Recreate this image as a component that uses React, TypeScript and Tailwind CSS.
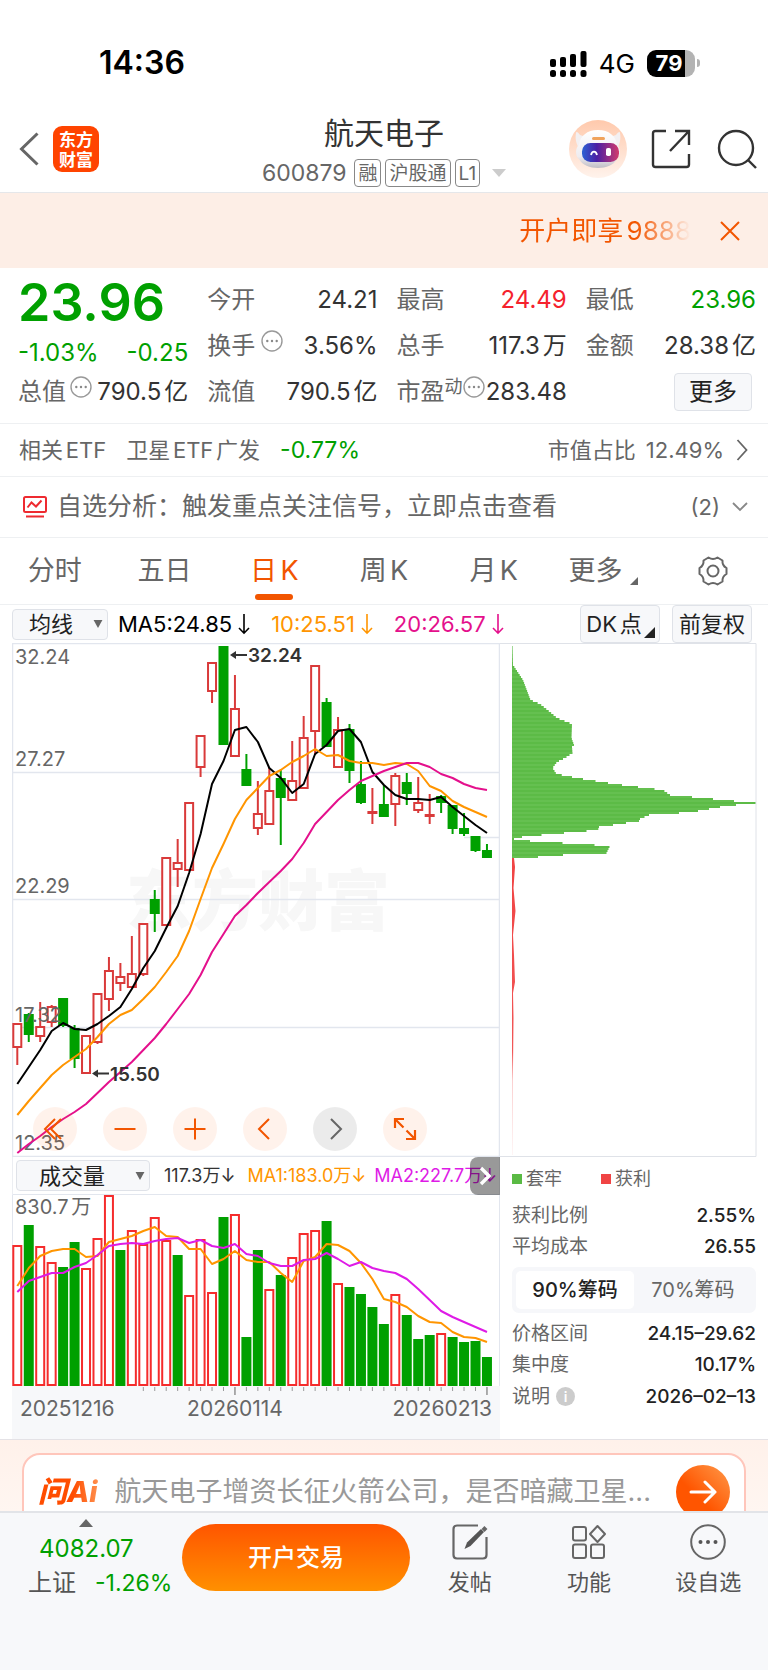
import React from "react";

type Candle = [kind: "r" | "g", high: number, top: number, bottom: number, low: number];

const FIRST_X = 17.3;
const STEP = 11.455;
const xAt = (i: number) => FIRST_X + i * STEP;

const candles: Candle[] = [
  ["r", 1024, 1024, 1047, 1065], ["g", 1013, 1015, 1034, 1042], ["r", 1002, 1027, 1036, 1042],
  ["r", 1005, 1007, 1022, 1027], ["g", 998, 999, 1025, 1027], ["g", 1025, 1029, 1058, 1068],
  ["r", 1036, 1036, 1073, 1073], ["r", 994, 994, 1042, 1044], ["r", 957, 971, 999, 1011],
  ["r", 963, 977, 983, 991], ["r", 936, 974, 987, 987], ["r", 924, 924, 974, 976],
  ["g", 890, 900, 913, 932], ["r", 858, 858, 925, 925], ["r", 839, 863, 869, 887],
  ["r", 803, 803, 870, 870], ["r", 736, 736, 767, 777], ["r", 663, 663, 691, 703],
  ["g", 646, 647, 744, 744], ["r", 675, 709, 756, 756], ["g", 754, 770, 785, 785],
  ["r", 781, 814, 828, 835], ["r", 768, 791, 824, 824], ["g", 770, 779, 797, 845],
  ["r", 741, 781, 800, 800], ["r", 716, 738, 788, 788], ["r", 666, 666, 731, 755],
  ["g", 698, 703, 746, 746], ["r", 717, 730, 767, 767], ["g", 724, 730, 770, 783],
  ["g", 761, 785, 802, 804], ["r", 788, 812, 813, 824], ["g", 785, 805, 816, 817],
  ["r", 773, 776, 804, 826], ["g", 773, 783, 793, 805], ["r", 777, 803, 810, 813],
  ["r", 794, 815, 816, 824], ["g", 795, 797, 802, 813], ["g", 806, 806, 828, 834],
  ["g", 813, 829, 833, 836], ["g", 837, 837, 850, 852], ["g", 844, 851, 857, 857],
];

const ma5 = [1084, 1067, 1050, 1031, 1023, 1029, 1030, 1024, 1016, 1007, 989, 968, 951, 928, 906, 873, 834, 784, 761, 730, 727, 742, 768, 778, 793, 784, 754, 745, 731, 729, 742, 772, 785, 795, 799, 799, 800, 797, 807, 816, 825, 833];
const ma10 = [1115, 1101, 1088, 1075, 1065, 1057, 1049, 1037, 1024, 1015, 1010, 999, 987, 972, 956, 931, 899, 868, 844, 819, 800, 788, 776, 770, 762, 756, 749, 756, 755, 761, 763, 763, 765, 763, 764, 771, 786, 791, 801, 807, 812, 817];
const ma20 = [1153, 1144, 1136, 1127, 1119, 1112, 1104, 1093, 1082, 1072, 1062, 1050, 1038, 1024, 1009, 994, 975, 952, 934, 916, 905, 893, 882, 871, 859, 843, 824, 812, 800, 790, 781, 776, 771, 767, 763, 763, 767, 774, 778, 784, 788, 790];

const volumeTops = [1246, 1226, 1247, 1263, 1268, 1243, 1269, 1239, 1196, 1251, 1231, 1245, 1218, 1241, 1256, 1296, 1240, 1293, 1218, 1215, 1338, 1251, 1290, 1276, 1258, 1234, 1231, 1222, 1284, 1288, 1295, 1308, 1325, 1295, 1316, 1340, 1336, 1334, 1338, 1343, 1342, 1358];
const volumeKinds = "rgrrggrrrgrrrrgrrrgrggrgrrrgrggggrgggrgggg";
const vma1 = [1286, 1268, 1256, 1251, 1249, 1249, 1257, 1256, 1242, 1239, 1236, 1231, 1227, 1236, 1237, 1249, 1249, 1264, 1259, 1251, 1260, 1262, 1262, 1273, 1282, 1261, 1257, 1244, 1245, 1251, 1263, 1279, 1299, 1302, 1307, 1316, 1322, 1323, 1332, 1337, 1338, 1342];
const vma2 = [1292, 1281, 1277, 1273, 1273, 1267, 1263, 1255, 1246, 1244, 1243, 1244, 1241, 1239, 1238, 1243, 1240, 1246, 1248, 1244, 1254, 1256, 1263, 1266, 1266, 1260, 1259, 1253, 1259, 1266, 1262, 1268, 1271, 1273, 1279, 1289, 1300, 1311, 1317, 1322, 1327, 1332];

const toPoints = (ys: number[]) => ys.map((y, i) => `${xAt(i).toFixed(1)},${y}`).join(" ");

/* Chip distribution: [price row, width of the bar] */
const trapped: [number, number][] = [
  [645, 0.5], [665, 1], [680, 11], [700, 18.5], [704, 28], [712, 38], [718, 45], [722, 55], [724, 60],
  [738, 59.5], [745, 62], [747, 60], [753, 60.5], [758, 53], [762, 45], [768, 40.5], [774, 44.5],
  [776, 55], [778, 65], [780, 77], [782, 90], [784, 102], [786, 118], [788, 134], [790, 151],
  [795, 158], [797, 180], [799, 201], [801, 222], [802, 244], [804, 243], [805, 224], [807, 208],
  [809, 197], [811, 186], [813, 167], [815, 137], [819, 128], [821, 127], [823, 114], [825, 101],
  [827, 87], [830, 86], [832, 63], [834, 41], [836, 18], [838, 2], [840, 2], [842, 34], [844, 67],
  [846, 98], [852, 95], [854, 94], [855, 51], [857, 26],
];
const widthAt = (y: number) => {
  for (let i = 1; i < trapped.length; i++) {
    const [y0, w0] = trapped[i - 1];
    const [y1, w1] = trapped[i];
    if (y <= y1) return w0 + ((w1 - w0) * (y - y0)) / (y1 - y0);
  }
  return 0;
};
const chipRows = Array.from({ length: 106 }, (_, i) => 646 + i * 2);

const GREEN = "#00a000";
const RED = "#d93a3a";

function More({ className = "" }: { className?: string }) {
  return (
    <svg viewBox="0 0 22 22" className={`size-[22px] shrink-0 ${className}`} aria-hidden="true">
      <circle cx="11" cy="11" r="10" fill="none" stroke="#999" strokeWidth="1.4" />
      <g fill="#888"><circle cx="6.3" cy="11" r="1.2" /><circle cx="11" cy="11" r="1.2" /><circle cx="15.7" cy="11" r="1.2" /></g>
    </svg>
  );
}

function DownArrow() {
  return (
    <svg viewBox="0 0 12 22" className="h-[22px] w-3" fill="none" stroke="currentColor" strokeWidth="1.6" aria-hidden="true">
      <path d="M6 1v19M1 15l5 5.2 5-5.2" />
    </svg>
  );
}

function Stat({ label, value, tone = "text-[#333]", children }: { label: string; value: string; tone?: string; children?: React.ReactNode }) {
  return (
    <div className="flex items-center justify-between text-[24px] text-[#666]">
      <span className="flex items-center">{label}{children}</span>
      <span className={`whitespace-nowrap ${tone}`}>{value}</span>
    </div>
  );
}

function StatusBar() {
  return (
    <div className="flex h-[106px] items-center justify-between pt-5 pr-[68px] pl-[99px] text-black">
      <span className="text-[32px] font-semibold">14:36</span>
      <div className="flex items-center">
        <svg viewBox="0 0 37 27" className="h-[27px] w-[37px]" aria-hidden="true">
          <rect x="0" y="9" width="6" height="8" rx="2" /><rect x="10" y="7" width="6" height="10" rx="2" />
          <rect x="20" y="4" width="6" height="13" rx="2" /><rect x="30.500" y="1" width="6" height="16" rx="2" />
          <rect x="0" y="20" width="6" height="7" rx="2.500" /><rect x="10" y="20" width="6" height="7" rx="2.500" />
          <rect x="20" y="20" width="6" height="7" rx="2.500" /><rect x="30.500" y="20" width="6" height="7" rx="2.500" />
        </svg>
        <span className="ml-3 text-[26px]">4G</span>
        <span className="relative ml-3 flex h-[27px] w-12 items-center justify-center overflow-hidden rounded-[9px] bg-[linear-gradient(90deg,#000_79%,#b3b3b3_79%)] pr-1 text-[22px] font-bold text-white">79</span>
        <span className="ml-0.5 h-2 w-[3px] rounded-r-full bg-[#b3b3b3]" />
      </div>
    </div>
  );
}

function Robot() {
  return (
    <svg viewBox="0 0 58 58" className="size-[58px]" aria-hidden="true">
      <defs>
        <linearGradient id="halo" x1="0" y1="0" x2="0" y2="1"><stop offset="0" stopColor="#ffc9ac" /><stop offset="1" stopColor="#fff3ec" /></linearGradient>
        <linearGradient id="shell" x1="0" y1="0" x2="0" y2="1"><stop offset="0" stopColor="#fff" /><stop offset=".7" stopColor="#eeecf0" /><stop offset="1" stopColor="#c0bdc5" /></linearGradient>
        <linearGradient id="visor" x1="0" y1="0" x2="1" y2="0"><stop offset="0" stopColor="#2c62d4" /><stop offset=".4" stopColor="#4a1fa4" /><stop offset="1" stopColor="#d23a6c" /></linearGradient>
      </defs>
      <circle cx="29" cy="29" r="29" fill="url(#halo)" />
      <path d="M7 13c0-2 2-1 4 2l6 2-7 11C7 24 6 18 7 13zM51 13c0-2-2-1-4 2l-6 2 7 11c3-4 4-10 3-15z" fill="#f3f0f2" />
      <path d="M29 10c11 0 18 6 19 15 4 3 4 11 0 14-3 6-11 9-19 9s-16-3-19-9c-4-3-4-11 0-14 1-9 8-15 19-15z" fill="url(#shell)" />
      <rect x="23" y="17" width="13" height="3" rx="1.500" fill="#f0a35c" />
      <rect x="13" y="23" width="37" height="19" rx="8.500" fill="url(#visor)" />
      <path d="M22 35c1-4.500 5-4.500 6 0" fill="none" stroke="#fff" strokeWidth="1.800" />
      <rect x="37" y="28" width="5" height="8" rx="1.800" fill="#fff" />
    </svg>
  );
}

function Header() {
  const tag = "flex h-7 items-center rounded-[4px] border border-[#888] px-[3px] text-[19px] leading-none";
  return (
    <header className="grid h-[87px] grid-cols-[1fr_auto_1fr] items-center border-b border-[#e5e7ea]">
      <div className="flex items-center gap-3.5 pl-[19px]">
        <button aria-label="返回">
          <svg viewBox="0 0 20 34" className="h-[34px] w-5" fill="none" stroke="#666" strokeWidth="3"><path d="M18.500 1.500 2.500 17l16 15.500" /></svg>
        </button>
        <div className="flex size-[46px] items-center justify-center rounded-[9px] bg-[#ff4400] text-center font-['Noto_Sans_CJK_SC',sans-serif] text-[17px] leading-5 font-bold text-white">
          <span>东方<br />财富</span>
        </div>
      </div>
      <div className="flex flex-col items-center gap-2 pt-1">
        <h1 className="text-[30px] leading-9 text-[#333]">航天电子</h1>
        <div className="flex items-center gap-1 text-[23px] leading-7 text-[#666]">
          <span className="mr-1">600879</span>
          <span className={tag}>融</span><span className={tag}>沪股通</span><span className={tag}>L1</span>
          <svg viewBox="0 0 14 8" className="ml-2 h-2 w-3.5" aria-hidden="true"><path d="M0 0h14L7 8z" fill="#ccc" /></svg>
        </div>
      </div>
      <div className="flex items-center justify-end pr-[11px]">
        <Robot />
        <button aria-label="分享" className="ml-6">
          <svg viewBox="0 0 40 40" className="size-10" fill="none" stroke="#333" strokeWidth="2.400"><path d="M15 2H4.500Q2 2 2 4.500v31Q2 38 4.500 38h31q2.500 0 2.500-2.500V25M24 2h14v14M38 2 19 22" /></svg>
        </button>
        <button aria-label="搜索" className="ml-[26px]">
          <svg viewBox="0 0 40 40" className="size-10" fill="none" stroke="#333" strokeWidth="2.400"><circle cx="19" cy="19" r="17" /><path d="m31 31 8 8" /></svg>
        </button>
      </div>
    </header>
  );
}

function Banner() {
  return (
    <div className="flex h-[75px] items-center justify-end bg-[#fdeee6] pr-[27px] text-[26px] text-[#f25500]">
      <a href="#open" className="bg-[linear-gradient(90deg,#f25500_68%,#fdeee6)] bg-clip-text text-transparent">开户即享9888</a>
      <button aria-label="关闭" className="ml-7">
        <svg viewBox="0 0 22 22" className="size-[22px]" fill="none" stroke="#f25500" strokeWidth="2"><path d="m2 2 18 18M20 2 2 20" /></svg>
      </button>
    </div>
  );
}

function Quote() {
  return (
    <section className="grid auto-rows-[46px] grid-cols-4 gap-x-[19px] border-b border-[#eef0f2] pt-[9px] pr-3 pb-2 pl-[18px]">
      <div className="row-span-2 flex flex-col justify-between pb-0.5 text-[#00a000]">
        <strong className="text-[52px] leading-[52px] font-semibold">23.96</strong>
        <div className="flex justify-between text-[24px] leading-7"><span>-1.03%</span><span>-0.25</span></div>
      </div>
      <Stat label="今开" value="24.21" />
      <Stat label="最高" value="24.49" tone="text-[#f5222d]" />
      <Stat label="最低" value="23.96" tone="text-[#00a000]" />
      <Stat label="换手" value="3.56%"><More className="-mt-2.5 ml-1.5" /></Stat>
      <Stat label="总手" value="117.3万" />
      <Stat label="金额" value="28.38亿" />
      <Stat label="总值" value="790.5亿"><More className="-mt-2.5 ml-1" /></Stat>
      <Stat label="流值" value="790.5亿" />
      <Stat label="市盈" value="283.48"><span className="-mt-3 text-[18px]">动</span><More className="-mt-2.5" /></Stat>
      <div className="flex items-center justify-end pr-1">
        <button className="h-[38px] rounded-[4px] border border-[#dfe2e8] bg-[#f7f8fa] px-3.5 text-[24px] leading-none text-[#222]">更多</button>
      </div>
    </section>
  );
}

function InfoRows() {
  return (
    <>
      <a href="#etf" className="flex h-[53px] items-center border-b border-[#eef0f2] pr-5 pl-[19px] text-[22px] text-[#666]">
        <span>相关ETF</span><span className="ml-5">卫星ETF广发</span><span className="ml-5 text-[23px] text-[#00a000]">-0.77%</span>
        <span className="ml-auto">市值占比</span><span className="ml-2.5">12.49%</span>
        <svg viewBox="0 0 12 22" className="ml-3 h-[22px] w-3" fill="none" stroke="#666" strokeWidth="1.800"><path d="m1.500 1 9 10-9 10" /></svg>
      </a>
      <a href="#analysis" className="flex h-[61px] items-center border-b border-[#eef0f2] pr-5 pl-[23px] text-[25px] text-[#666]">
        <svg viewBox="0 0 24 22" className="mr-2.5 h-[22px] w-6" fill="none" stroke="#ee2a30" strokeWidth="2"><rect x="1" y="1" width="22" height="15" rx="1.500" /><path d="m4.500 11.500 4-5 4.500 4 5.500-6M3 20.500h18" /></svg>
        <span>自选分析：触发重点关注信号，立即点击查看</span>
        <span className="ml-auto text-[22px]">(2)</span>
        <svg viewBox="0 0 16 10" className="ml-3 h-2.5 w-4" fill="none" stroke="#888" strokeWidth="1.800"><path d="m1 1 7 7 7-7" /></svg>
      </a>
    </>
  );
}

function Tabs() {
  const tabs = ["分时", "五日", "日K", "周K", "月K", "更多"];
  return (
    <nav className="grid h-[67px] grid-cols-7 border-b border-[#eef0f2] text-[27px] text-[#666]">
      {tabs.map((t) => (
        <button key={t} className={`relative flex items-center justify-center ${t === "日K" ? "text-[#f25500]" : ""}`}>
          {t}
          {t === "日K" && <span className="absolute bottom-1 h-1.5 w-[38px] rounded-[3px] bg-[#f25500]" />}
          {t === "更多" && <svg viewBox="0 0 8 8" className="mt-5 ml-2 size-2"><path d="M8 0v8H0z" fill="#666" /></svg>}
        </button>
      ))}
      <button aria-label="设置" className="flex items-center justify-center">
        <svg viewBox="0 0 32 32" className="size-8" fill="none" stroke="#666" strokeWidth="2" strokeLinejoin="round">
          <path d="M11.500 2.500Q16 5.500 20.500 2.500L25.500 5.500Q25 10.500 29.500 13V19Q25 21.500 25.500 26.500L20.500 29.500Q16 26.500 11.500 29.500L6.500 26.500Q7 21.500 2.500 19V13Q7 10.500 6.500 5.500Z" />
          <circle cx="16" cy="16" r="5.500" />
        </svg>
      </button>
    </nav>
  );
}

function Indicators() {
  const btn = "relative h-[38px] rounded-[4px] border border-[#dfe2e8] bg-[#f7f8fa] text-[22px] leading-none whitespace-nowrap text-[#222]";
  return (
    <div className="flex h-[38px] items-center pr-4 pl-3 text-[22px]">
      <button className="flex h-[31px] w-24 items-center justify-between rounded-[4px] border border-[#dfe2e8] bg-[#f7f8fa] pr-1 pl-4 leading-none text-[#222]">
        均线<svg viewBox="0 0 10 9" className="h-2 w-2.5"><path d="M0 0h10L5 9z" fill="#666" /></svg>
      </button>
      <span className="ml-2.5 flex items-center gap-1.5 text-black">MA5:24.85<DownArrow /></span>
      <span className="ml-[21px] flex items-center gap-1.5 text-[#ff9500]">10:25.51<DownArrow /></span>
      <span className="ml-[21px] flex items-center gap-1.5 text-[#e4108c]">20:26.57<DownArrow /></span>
      <button className={`${btn} ml-auto w-20 pr-3`}>DK点<svg viewBox="0 0 12 12" className="absolute right-1 bottom-1 size-[11px]"><path d="M12 0v12H0z" fill="#222" /></svg></button>
      <button className={`${btn} ml-3 w-20`}>前复权</button>
    </div>
  );
}

function CandleChart() {
  const round = "flex size-11 items-center justify-center rounded-full";
  const icon = "size-6";
  return (
    <div className="relative">
      <svg viewBox="12 643 488 514" className="block w-full" role="img" aria-label="日K">
        <text x="126" y="925" fontSize="66" fontWeight="900" fill="#f7f7f7">东方财富</text>
        <g stroke="#e2e6ee" fill="none">
          <path d="M12 772.500H500M12 899.500H500M12 1027.500H500M464 837.500H500" strokeWidth="1.500" />
          <path d="M12.500 643.500H499.500V1156.500H12.500Z" strokeWidth="1.500" />
        </g>
        <g strokeWidth="2">
          {candles.map(([kind, high, top, bottom, low], i) => {
            const x = xAt(i);
            const color = kind === "r" ? RED : GREEN;
            return (
              <g key={i} stroke={color} fill={kind === "r" ? "#fff" : GREEN}>
                <path d={`M${x} ${high}V${top}M${x} ${bottom}V${low}`} />
                <rect x={x - 4} y={top} width="8" height={bottom - top} />
              </g>
            );
          })}
        </g>
        <g fontSize="20" fill="#666">
          <text x="15" y="664">32.24</text><text x="15" y="766">27.27</text><text x="15" y="893">22.29</text>
          <text x="15" y="1022">17.32</text><text x="15" y="1150">12.35</text>
        </g>
        <g fill="none" strokeWidth="2" strokeLinejoin="round">
          <polyline points={toPoints(ma5)} stroke="#000" />
          <polyline points={toPoints(ma10)} stroke="#ff9500" />
          <polyline points={toPoints(ma20)} stroke="#e4108c" />
        </g>
        <g fontSize="19" fontWeight="600" fill="#333">
          <text x="248" y="662">32.24</text><text x="110" y="1081">15.50</text>
          <path d="M230 655l6-4v3h11v2h-11v3zM92 1073.500l6-4v3h11v2h-11v3z" />
        </g>
      </svg>
      <div className="absolute bottom-1.5 left-[21px] flex gap-[26px] text-[#f25500]">
        <button aria-label="最早" className={`${round} bg-[#ff5500]/8`}>
          <svg viewBox="0 0 24 24" className={icon} fill="none" stroke="currentColor" strokeWidth="2"><path d="M12 2 2 12l10 10M18 2 8 12l10 10" /></svg>
        </button>
        <button aria-label="缩小" className={`${round} bg-[#ff5500]/8`}>
          <svg viewBox="0 0 24 24" className={icon} fill="none" stroke="currentColor" strokeWidth="2"><path d="M1.500 12h21" /></svg>
        </button>
        <button aria-label="放大" className={`${round} bg-[#ff5500]/8`}>
          <svg viewBox="0 0 24 24" className={icon} fill="none" stroke="currentColor" strokeWidth="2"><path d="M1.500 12h21M12 1.500v21" /></svg>
        </button>
        <button aria-label="左移" className={`${round} bg-[#ff5500]/8`}>
          <svg viewBox="0 0 24 24" className={icon} fill="none" stroke="currentColor" strokeWidth="2"><path d="M16 2 6 12l10 10" /></svg>
        </button>
        <button aria-label="右移" className={`${round} bg-black/8 text-[#666]`}>
          <svg viewBox="0 0 24 24" className={icon} fill="none" stroke="currentColor" strokeWidth="2"><path d="m8 2 10 10L8 22" /></svg>
        </button>
        <button aria-label="全屏" className={`${round} bg-[#ff5500]/8`}>
          <svg viewBox="0 0 24 24" className={icon} fill="none" stroke="currentColor" strokeWidth="2.200"><path d="M11 2H2v9M2 2l8.500 8.500M22 13v9h-9M22 22l-8.500-8.500" /></svg>
        </button>
      </div>
    </div>
  );
}

function VolumeHeader() {
  return (
    <div className="relative flex h-[37px] items-center border-x border-[#eceef2] pl-[3px] text-[18px] whitespace-nowrap [text-autospace:no-autospace]">
      <button className="flex h-[31px] w-[134px] items-center justify-between rounded-[4px] border border-[#dfe2e8] bg-[#f7f8fa] pr-1 pl-[22px] text-[22px] leading-none text-[#222]">
        成交量<svg viewBox="0 0 10 9" className="h-2 w-2.5"><path d="M0 0h10L5 9z" fill="#666" /></svg>
      </button>
      <span className="ml-3.5 text-[#333]">117.3万↓</span>
      <span className="ml-3 text-[#ff9500]">MA1:183.0万↓</span>
      <span className="ml-2 text-[#de1be6]">MA2:227.7万↓</span>
      <button aria-label="展开" className="absolute top-0 -right-px flex h-[38px] w-[30px] items-center justify-center rounded-l-[8px] bg-black/40">
        <svg viewBox="0 0 12 20" className="h-5 w-3" fill="none" stroke="#fff" strokeWidth="3.400"><path d="m2 2 8 8-8 8" /></svg>
      </button>
    </div>
  );
}

function VolumeChart() {
  return (
    <svg viewBox="12 1194 488 245" className="block w-full" role="img" aria-label="成交量">
      <rect x="12" y="1386" width="488" height="53" fill="#f7f8fa" />
      <path d="M12.500 1386V1194.500H499.500V1386" fill="none" stroke="#e2e6ee" />
      <g strokeWidth="2">
        {volumeTops.map((top, i) => {
          const red = volumeKinds[i] === "r";
          return <rect key={i} x={xAt(i) - 4} y={top} width="8" height={1385 - top} fill={red ? "#fff" : GREEN} stroke={red ? "#f52c2c" : GREEN} />;
        })}
      </g>
      <g stroke="#999" strokeWidth="1">
        {volumeTops.map((_, i) => (i > 10 ? <path key={i} d={`M${xAt(i)} 1387v${i === 19 || i === 41 ? 8 : 4}`} strokeWidth={i === 19 || i === 41 ? 1.6 : 1} /> : null))}
      </g>
      <g fill="none" strokeWidth="2" strokeLinejoin="round">
        <polyline points={toPoints(vma1)} stroke="#ff9500" />
        <polyline points={toPoints(vma2)} stroke="#de1be6" />
      </g>
      <g fontSize="20" fill="#666">
        <text x="15" y="1214">830.7万</text>
      </g>
      <g fontSize="21" fill="#666">
        <text x="20" y="1416">20251216</text>
        <text x="235" y="1416" textAnchor="middle">20260114</text>
        <text x="492" y="1416" textAnchor="end">20260213</text>
      </g>
    </svg>
  );
}

function ChipChart() {
  return (
    <svg viewBox="500 643 257 514" className="block w-full" role="img" aria-label="筹码分布">
      <defs>
        <linearGradient id="profitFade" x1="0" y1="0" x2="0" y2="1"><stop offset="0" stopColor="#f04444" /><stop offset=".65" stopColor="#f04444" stopOpacity=".9" /><stop offset=".75" stopColor="#f04444" stopOpacity=".25" /><stop offset="1" stopColor="#f04444" stopOpacity=".05" /></linearGradient>
      </defs>
      <path d="M500 643.500H756V1156.500H500" fill="none" stroke="#dfe2e8" />
      {chipRows.map((y, i) => (
        <rect key={y} x="512" y={y} width={widthAt(y + 1)} height="2" fill={i % 2 ? "#65c050" : "#5cbb46"} />
      ))}
      <path d="M512 858H514L515 867 513.500 888 515.500 911 513 935 514 955 515 982 513 993 513.500 1018 513 1067V1155H512Z" fill="url(#profitFade)" />
    </svg>
  );
}

function ChipStats() {
  const row = "flex items-center justify-between";
  const value = "text-[19px] font-medium text-[#222]";
  return (
    <div className="flex flex-col pr-px pl-3 text-[19px] leading-none text-[#666]">
      <div className="mt-2 flex h-7 items-center text-[18px]">
        <span className="mr-1 size-2.5 bg-[#5aba44]" />套牢
        <span className="mr-1 ml-[39px] size-2.5 bg-[#f04444]" />获利
      </div>
      <dl>
        <div className={`${row} mt-[7px] h-[31px]`}><dt>获利比例</dt><dd className={value}>2.55%</dd></div>
        <div className={`${row} h-[31px]`}><dt>平均成本</dt><dd className={value}>26.55</dd></div>
      </dl>
      <div className="my-[5px] flex h-[46px] rounded-[7px] bg-[#f6f7fa] p-1 text-[20px] [text-autospace:no-autospace]">
        <button className="flex-1 rounded-[5px] bg-white font-medium text-[#222]">90%筹码</button>
        <button className="flex-1">70%筹码</button>
      </div>
      <dl>
        <div className={`${row} h-[31px]`}><dt>价格区间</dt><dd className={value}>24.15–29.62</dd></div>
        <div className={`${row} h-[31px]`}><dt>集中度</dt><dd className={value}>10.17%</dd></div>
        <div className={`${row} h-[33px]`}>
          <dt className="flex items-center gap-1.5">说明<span className="flex size-[19px] items-center justify-center rounded-full bg-[#ccc] text-[14px] font-semibold text-white">i</span></dt>
          <dd className={value}>2026–02–13</dd>
        </div>
      </dl>
    </div>
  );
}

function AskAi() {
  return (
    <div className="h-[72px] overflow-hidden border-t border-[#e4e2e6] bg-[linear-gradient(180deg,#fff1ea,#fff6f1)] px-[22px] pt-[13px] [text-autospace:no-autospace]">
      <div className="flex h-[78px] items-center rounded-t-[18px] border-2 border-[#ffc6bb] bg-white pr-3.5 pl-3.5">
        <span className="bg-[linear-gradient(90deg,#ff4d00_55%,#ff9a5a)] bg-clip-text pr-1 text-[29px] font-extrabold text-transparent italic">问Ai</span>
        <a href="#ask" className="ml-[13px] flex-1 truncate text-[27px] text-[#999]">航天电子增资长征火箭公司，是否暗藏卫星...</a>
        <button aria-label="发送" className="flex size-[54px] shrink-0 items-center justify-center rounded-full bg-[linear-gradient(225deg,#ff9a4a,#ff5500_60%)]">
          <svg viewBox="0 0 28 24" className="h-6 w-7" fill="none" stroke="#fff" strokeWidth="3" strokeLinecap="round" strokeLinejoin="round"><path d="M2 12h24M16 2l10 10-10 10" /></svg>
        </button>
      </div>
    </div>
  );
}

function BottomBar() {
  const item = "flex flex-1 flex-col items-center gap-2 pt-[11px] text-[22px] leading-7 text-[#555]";
  return (
    <footer className="flex h-[159px] border-t-2 border-[#e2e4e8] bg-[#f7f8fa]">
      <div className="flex w-[182px] shrink-0 flex-col pt-1.5 pl-7 text-[24px]">
        <svg viewBox="0 0 14 8" className="ml-[51px] h-2 w-3.5"><path d="M7 0l7 8H0z" fill="#666" /></svg>
        <span className="mt-2 ml-[11px] text-[24px] leading-7 text-[#00a000]">4082.07</span>
        <span className="mt-1.5 flex items-center gap-[19px] leading-7 text-[#555]">上证<span className="text-[23px] text-[#00a000]">-1.26%</span></span>
      </div>
      <button className="mt-[11px] h-[67px] w-[228px] shrink-0 rounded-full bg-[linear-gradient(180deg,#ff5500,#ff9000)] text-[24px] font-medium text-white">开户交易</button>
      <button className={item}>
        <svg viewBox="0 0 36 36" className="size-9" fill="none" stroke="#666" strokeWidth="2.200"><path d="M26 1.500H5Q1.500 1.500 1.500 5v26Q1.500 34.500 5 34.500h26q3.500 0 3.500-3.500V13" /><path d="M12.500 25 15 18.500 29 5l3 3-13.500 14z" fill="#555" stroke="none" /><path d="m31 3.500 3 3" strokeWidth="4" /></svg>
        发帖
      </button>
      <button className={item}>
        <svg viewBox="0 0 36 36" className="size-9" fill="none" stroke="#666" strokeWidth="2"><rect x="2" y="3" width="13" height="13.500" rx="2" /><rect x="2" y="20.500" width="13" height="13.500" rx="2" /><rect x="20" y="20.500" width="13" height="13.500" rx="2" /><path d="m26.500 2 7.500 8-7.500 8-7.500-8z" strokeLinejoin="round" /></svg>
        功能
      </button>
      <button className={item}>
        <svg viewBox="0 0 36 36" className="size-9"><circle cx="18" cy="18" r="16.800" fill="none" stroke="#666" strokeWidth="2" /><g fill="#555"><circle cx="10.500" cy="18" r="2" /><circle cx="18" cy="18" r="2" /><circle cx="25.500" cy="18" r="2" /></g></svg>
        设自选
      </button>
    </footer>
  );
}

export default function App() {
  return (
    <main lang="zh-CN" className="w-full bg-white font-['Inter','Noto_Sans_CJK_SC',sans-serif] text-[#333] [text-autospace:normal]">
      <StatusBar />
      <Header />
      <Banner />
      <Quote />
      <InfoRows />
      <Tabs />
      <Indicators />
      <div className="flex pr-[11px] pl-3">
        <div className="min-w-0 flex-[488]"><CandleChart /><VolumeHeader /><VolumeChart /></div>
        <div className="min-w-0 flex-[257]"><ChipChart /><ChipStats /></div>
      </div>
      <AskAi />
      <BottomBar />
    </main>
  );
}
